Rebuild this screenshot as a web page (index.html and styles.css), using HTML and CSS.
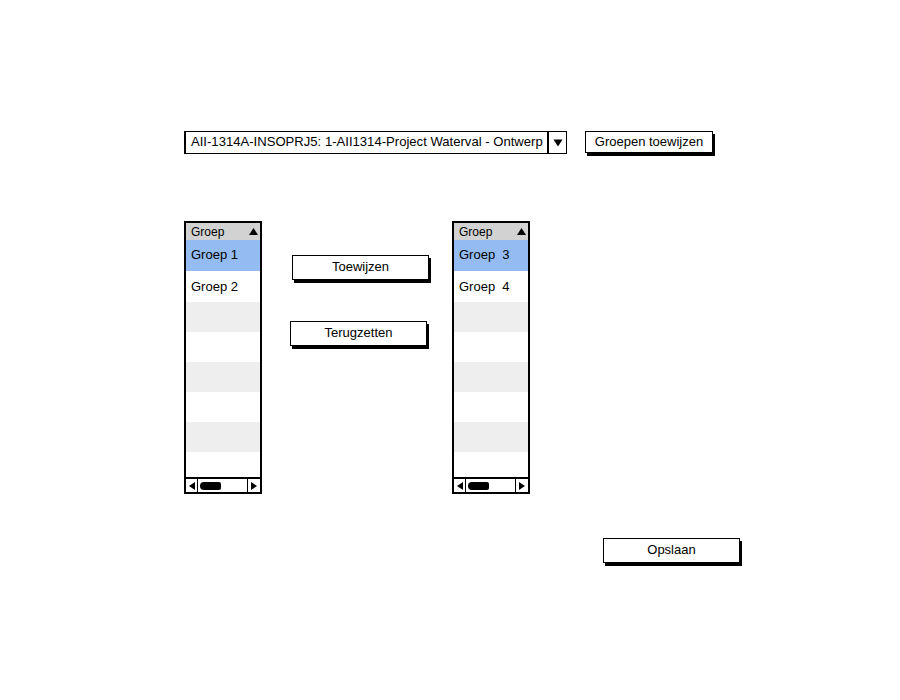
FILE: index.html
```html
<!DOCTYPE html>
<html>
<head>
<meta charset="utf-8">
<link rel="stylesheet" href="styles.css">
</head>
<body>
<div class="page">
  <div class="toprow">
    <div class="combo">
      <span class="combo-text">AII-1314A-INSOPRJ5: 1-AII1314-Project Waterval - Ontwerp</span>
      <span class="combo-btn"><svg width="10" height="8" viewBox="0 0 10 8"><path d="M0.5 0.5 L9.5 0.5 L5 7.5 Z" fill="#000"/></svg></span>
    </div>
    <div class="btn btn-top">Groepen toewijzen</div>
  </div>

  <div class="main">
    <div class="list">
      <div class="list-head"><span>Groep</span><svg width="9" height="7" viewBox="0 0 9 7"><path d="M4.5 0 L9 7 L0 7 Z" fill="#000"/></svg></div>
      <div class="row sel">Groep 1</div>
      <div class="row r2">Groep 2</div>
      <div class="row alt"></div>
      <div class="row"></div>
      <div class="row alt"></div>
      <div class="row"></div>
      <div class="row alt"></div>
      <div class="row last"></div>
      <div class="scroll">
        <span class="arr l"><svg width="6" height="8" viewBox="0 0 6 8"><path d="M6 0 L0 4 L6 8 Z" fill="#000"/></svg></span>
        <span class="track"><span class="thumb"></span></span>
        <span class="arr r"><svg width="6" height="8" viewBox="0 0 6 8"><path d="M0 0 L6 4 L0 8 Z" fill="#000"/></svg></span>
      </div>
    </div>

    <div class="mid">
      <div class="btn btn-mid b1">Toewijzen</div>
      <div class="btn btn-mid b2">Terugzetten</div>
    </div>

    <div class="list">
      <div class="list-head"><span>Groep</span><svg width="9" height="7" viewBox="0 0 9 7"><path d="M4.5 0 L9 7 L0 7 Z" fill="#000"/></svg></div>
      <div class="row sel">Groep&nbsp; 3</div>
      <div class="row r2">Groep&nbsp; 4</div>
      <div class="row alt"></div>
      <div class="row"></div>
      <div class="row alt"></div>
      <div class="row"></div>
      <div class="row alt"></div>
      <div class="row last"></div>
      <div class="scroll">
        <span class="arr l"><svg width="6" height="8" viewBox="0 0 6 8"><path d="M6 0 L0 4 L6 8 Z" fill="#000"/></svg></span>
        <span class="track"><span class="thumb"></span></span>
        <span class="arr r"><svg width="6" height="8" viewBox="0 0 6 8"><path d="M0 0 L6 4 L0 8 Z" fill="#000"/></svg></span>
      </div>
    </div>
  </div>

  <div class="bottomrow">
    <div class="btn btn-save">Opslaan</div>
  </div>
</div>
</body>
</html>
```

FILE: styles.css
```css
html, body {
  margin: 0;
  padding: 0;
  background: #fff;
}
body {
  font-family: "Liberation Sans", Arial, sans-serif;
  color: #000;
  width: 900px;
  height: 700px;
}
.page {
  padding: 131px 0 0 184px;
}
.toprow {
  display: flex;
  align-items: flex-start;
  gap: 18px;
}
.combo {
  width: 383px;
  height: 23px;
  box-sizing: border-box;
  border: 1.5px solid #000;
  border-left-width: 2px;
  display: flex;
  align-items: stretch;
  background: #fff;
}
.combo-text {
  flex: 1;
  font-size: 13.1px;
  line-height: 20px;
  padding-left: 5px;
  white-space: nowrap;
  overflow: hidden;
}
.combo-btn {
  width: 17px;
  border-left: 2px solid #000;
  display: flex;
  align-items: center;
  justify-content: center;
}
.btn {
  box-sizing: border-box;
  border: 1.5px solid #000;
  background: #fff;
  box-shadow: 2px 3px 0 #000;
  text-align: center;
  font-size: 13px;
}
.btn-top {
  width: 128px;
  height: 22px;
  line-height: 19px;
}
.main {
  display: flex;
  align-items: flex-start;
  margin-top: 67px;
}
.list {
  width: 78px;
  height: 273px;
  box-sizing: border-box;
  border: 2px solid #000;
  border-left-width: 2.5px;
  display: flex;
  flex-direction: column;
  overflow: hidden;
}
.list-head {
  height: 17px;
  background: #d2d2d2;
  display: flex;
  align-items: center;
  justify-content: space-between;
  padding: 0 2px 0 5px;
  font-size: 12px;
}
.row {
  height: 30px;
  flex: none;
  font-size: 13px;
  line-height: 30px;
  padding-left: 5px;
  background: #fff;
}
.row.sel {
  height: 31px;
  background: #94bcf2;
}
.row.r2 {
  height: 31px;
  line-height: 32px;
}
.row.alt {
  background: #eeeeee;
}
.row.last {
  height: auto;
  flex: 1;
}
.scroll {
  height: 15px;
  flex: none;
  border-top: 2px solid #000;
  display: flex;
  align-items: stretch;
  box-sizing: border-box;
}
.arr {
  width: 11px;
  display: flex;
  align-items: center;
  justify-content: center;
}
.arr.l {
  border-right: 1.5px solid #000;
}
.arr.r {
  width: 12px;
  border-left: 1.5px solid #000;
}
.track {
  flex: 1;
  display: flex;
  align-items: center;
  padding-left: 2px;
}
.thumb {
  width: 21px;
  height: 8px;
  background: #000;
  border-radius: 4px 2px 2px 4px;
}
.mid {
  width: 190px;
  display: flex;
  flex-direction: column;
  padding-left: 29px;
  box-sizing: border-box;
}
.btn-mid {
  width: 137px;
  height: 25px;
  line-height: 22px;
}
.b1 {
  margin-top: 34px;
  margin-left: 1px;
}
.b2 {
  margin-top: 41px;
  margin-left: -1px;
}
.bottomrow {
  display: flex;
  padding-left: 419px;
  margin-top: 44px;
}
.btn-save {
  width: 137px;
  height: 25px;
  line-height: 22px;
}
```
